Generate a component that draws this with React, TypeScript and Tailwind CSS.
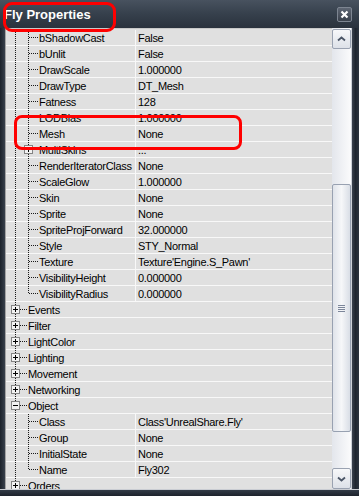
import React from "react";

type Row = {
  label: string;
  value?: string;
  level: 0 | 1;
  box?: "+" | "-";
  last?: boolean;
};

const rows: Row[] = [
  { label: "bShadowCast", value: "False", level: 1 },
  { label: "bUnlit", value: "False", level: 1 },
  { label: "DrawScale", value: "1.000000", level: 1 },
  { label: "DrawType", value: "DT_Mesh", level: 1 },
  { label: "Fatness", value: "128", level: 1 },
  { label: "LODBias", value: "1.000000", level: 1 },
  { label: "Mesh", value: "None", level: 1 },
  { label: "MultiSkins", value: "...", level: 1, box: "+" },
  { label: "RenderIteratorClass", value: "None", level: 1 },
  { label: "ScaleGlow", value: "1.000000", level: 1 },
  { label: "Skin", value: "None", level: 1 },
  { label: "Sprite", value: "None", level: 1 },
  { label: "SpriteProjForward", value: "32.000000", level: 1 },
  { label: "Style", value: "STY_Normal", level: 1 },
  { label: "Texture", value: "Texture'Engine.S_Pawn'", level: 1 },
  { label: "VisibilityHeight", value: "0.000000", level: 1 },
  { label: "VisibilityRadius", value: "0.000000", level: 1, last: true },
  { label: "Events", level: 0, box: "+" },
  { label: "Filter", level: 0, box: "+" },
  { label: "LightColor", level: 0, box: "+" },
  { label: "Lighting", level: 0, box: "+" },
  { label: "Movement", level: 0, box: "+" },
  { label: "Networking", level: 0, box: "+" },
  { label: "Object", level: 0, box: "-" },
  { label: "Class", value: "Class'UnrealShare.Fly'", level: 1 },
  { label: "Group", value: "None", level: 1 },
  { label: "InitialState", value: "None", level: 1 },
  { label: "Name", value: "Fly302", level: 1, last: true },
  { label: "Orders", level: 0, box: "+" },
];

function Dots(props: { x1: number; y1: number; x2: number; y2: number }) {
  return <line {...props} stroke="#1a1a1a" strokeDasharray="1 1" />;
}

function Expander({ cx, sign }: { cx: number; sign: "+" | "-" }) {
  return (
    <g>
      <rect x={cx - 4} y={3.5} width={8} height={8} fill="#f2f2f2" stroke="#848484" />
      <line x1={cx - 2.5} y1={7.5} x2={cx + 2.5} y2={7.5} stroke="#000" />
      {sign === "+" && <line x1={cx} y1={5} x2={cx} y2={10} stroke="#000" />}
    </g>
  );
}

function Gutter({ row }: { row: Row }) {
  const width = row.level === 0 ? 22 : 33;
  return (
    <svg width={width} height={15} className="shrink-0" shapeRendering="crispEdges">
      <Dots x1={9.5} y1={0} x2={9.5} y2={15} />
      {row.level === 0 ? (
        <>
          <Dots x1={14} y1={7.5} x2={22} y2={7.5} />
          {row.box && <Expander cx={9.5} sign={row.box} />}
        </>
      ) : (
        <>
          <Dots x1={22.5} y1={0} x2={22.5} y2={row.last ? 8 : 15} />
          <Dots x1={row.box ? 27 : 23} y1={7.5} x2={33} y2={7.5} />
          {row.box && <Expander cx={22.5} sign={row.box} />}
        </>
      )}
    </svg>
  );
}

function PropRow({ row }: { row: Row }) {
  return (
    <div className="flex h-[16px] shrink-0 border-b border-[#f8f8f8] text-[11px] leading-[15px] tracking-[-0.3px] text-black">
      <div className={`flex items-center overflow-hidden whitespace-nowrap ${row.value === undefined ? "flex-1" : "w-[129px]"}`}>
        <Gutter row={row} />
        <span className="pt-[1px]">{row.label}</span>
      </div>
      {row.value !== undefined && (
        <div className="flex-1 overflow-hidden whitespace-nowrap border-l border-[#f8f8f8] pl-[2px] pt-[1px]">{row.value}</div>
      )}
    </div>
  );
}

function ScrollButton({ down }: { down?: boolean }) {
  return (
    <div className="flex h-full items-center justify-center rounded-[2px] border border-[#9aa2b1] bg-gradient-to-b from-[#f7f8fa] to-[#dde1e8]">
      <svg width="9" height="6" viewBox="0 0 9 6">
        <path
          d={down ? "M1 1.5 L4.5 4.5 L8 1.5" : "M1 4.5 L4.5 1.5 L8 4.5"}
          fill="none"
          stroke="#4b5566"
          strokeWidth="1.8"
        />
      </svg>
    </div>
  );
}

function ScrollBar() {
  return (
    <div className="flex w-[19px] flex-col bg-gradient-to-r from-[#e3e6ec] to-[#fbfbfc]">
      <div className="mt-[1px] h-[20px]">
        <ScrollButton />
      </div>
      <div className="h-[135px]" />
      <div className="flex h-[248px] flex-col items-center justify-center gap-[1px] rounded-[2px] border border-[#98a1b1] bg-gradient-to-r from-[#dfe3ea] via-[#f6f7f9] to-[#d9dee6]">
        <div className="h-[1px] w-[7px] bg-[#7c869a]" />
        <div className="h-[1px] w-[7px] bg-[#7c869a]" />
        <div className="h-[1px] w-[7px] bg-[#7c869a]" />
        <div className="h-[1px] w-[7px] bg-[#7c869a]" />
      </div>
      <div className="flex-1" />
      <div className="h-[21px]">
        <ScrollButton down />
      </div>
    </div>
  );
}

export default function App() {
  return (
    <div
      className="relative flex h-[496px] w-[359px] flex-col overflow-hidden bg-[#262d37]"
      style={{ fontFamily: '"Liberation Sans", Arial, sans-serif' }}
    >
      <div className="flex h-[28px] shrink-0 items-start justify-between bg-gradient-to-b from-[#48525f] via-[#36404c] to-[#2a323d] pr-[7px]">
        <span className="pl-[4px] pt-[7px] text-[13px] font-bold leading-[16px] text-white">Fly Properties</span>
        <div className="mt-[7px] flex h-[15px] w-[15px] items-center justify-center rounded-[2px] border border-[#7d8591] bg-gradient-to-b from-[#5e6673] to-[#3a414c]">
          <svg width="9" height="9" viewBox="0 0 9 9">
            <path d="M1.5 1.5 L7.5 7.5 M7.5 1.5 L1.5 7.5" stroke="#fff" strokeWidth="2.2" />
          </svg>
        </div>
      </div>

      <div className="flex h-[461px] shrink-0">
        <div className="w-[5px] bg-gradient-to-r from-[#1c222b] to-[#39414d]" />
        <div className="w-[1px] bg-[#a4a4a4]" />
        <div className="flex w-[326px] flex-col overflow-hidden border-t border-[#c8c8c8] bg-[#e0e0e0] pt-[1px]">
          {rows.map((row) => (
            <PropRow key={row.label} row={row} />
          ))}
        </div>
        <ScrollBar />
        <div className="w-[1px] bg-[#cdd1d8]" />
        <div className="w-[7px] bg-gradient-to-r from-[#3a424e] via-[#1f2630] to-[#2c343f]" />
      </div>

      <div className="h-[7px] shrink-0 border-t border-[#c9ccd2] bg-gradient-to-b from-[#333b47] to-[#1d232c]" />

      <div className="pointer-events-none absolute left-[3px] top-[2px] h-[30px] w-[113px] rounded-[9px] border-[3px] border-[#ff0000]" />
      <div className="pointer-events-none absolute left-[14px] top-[115px] h-[35px] w-[228px] rounded-[8px] border-[3px] border-[#ff0000]" />
    </div>
  );
}
